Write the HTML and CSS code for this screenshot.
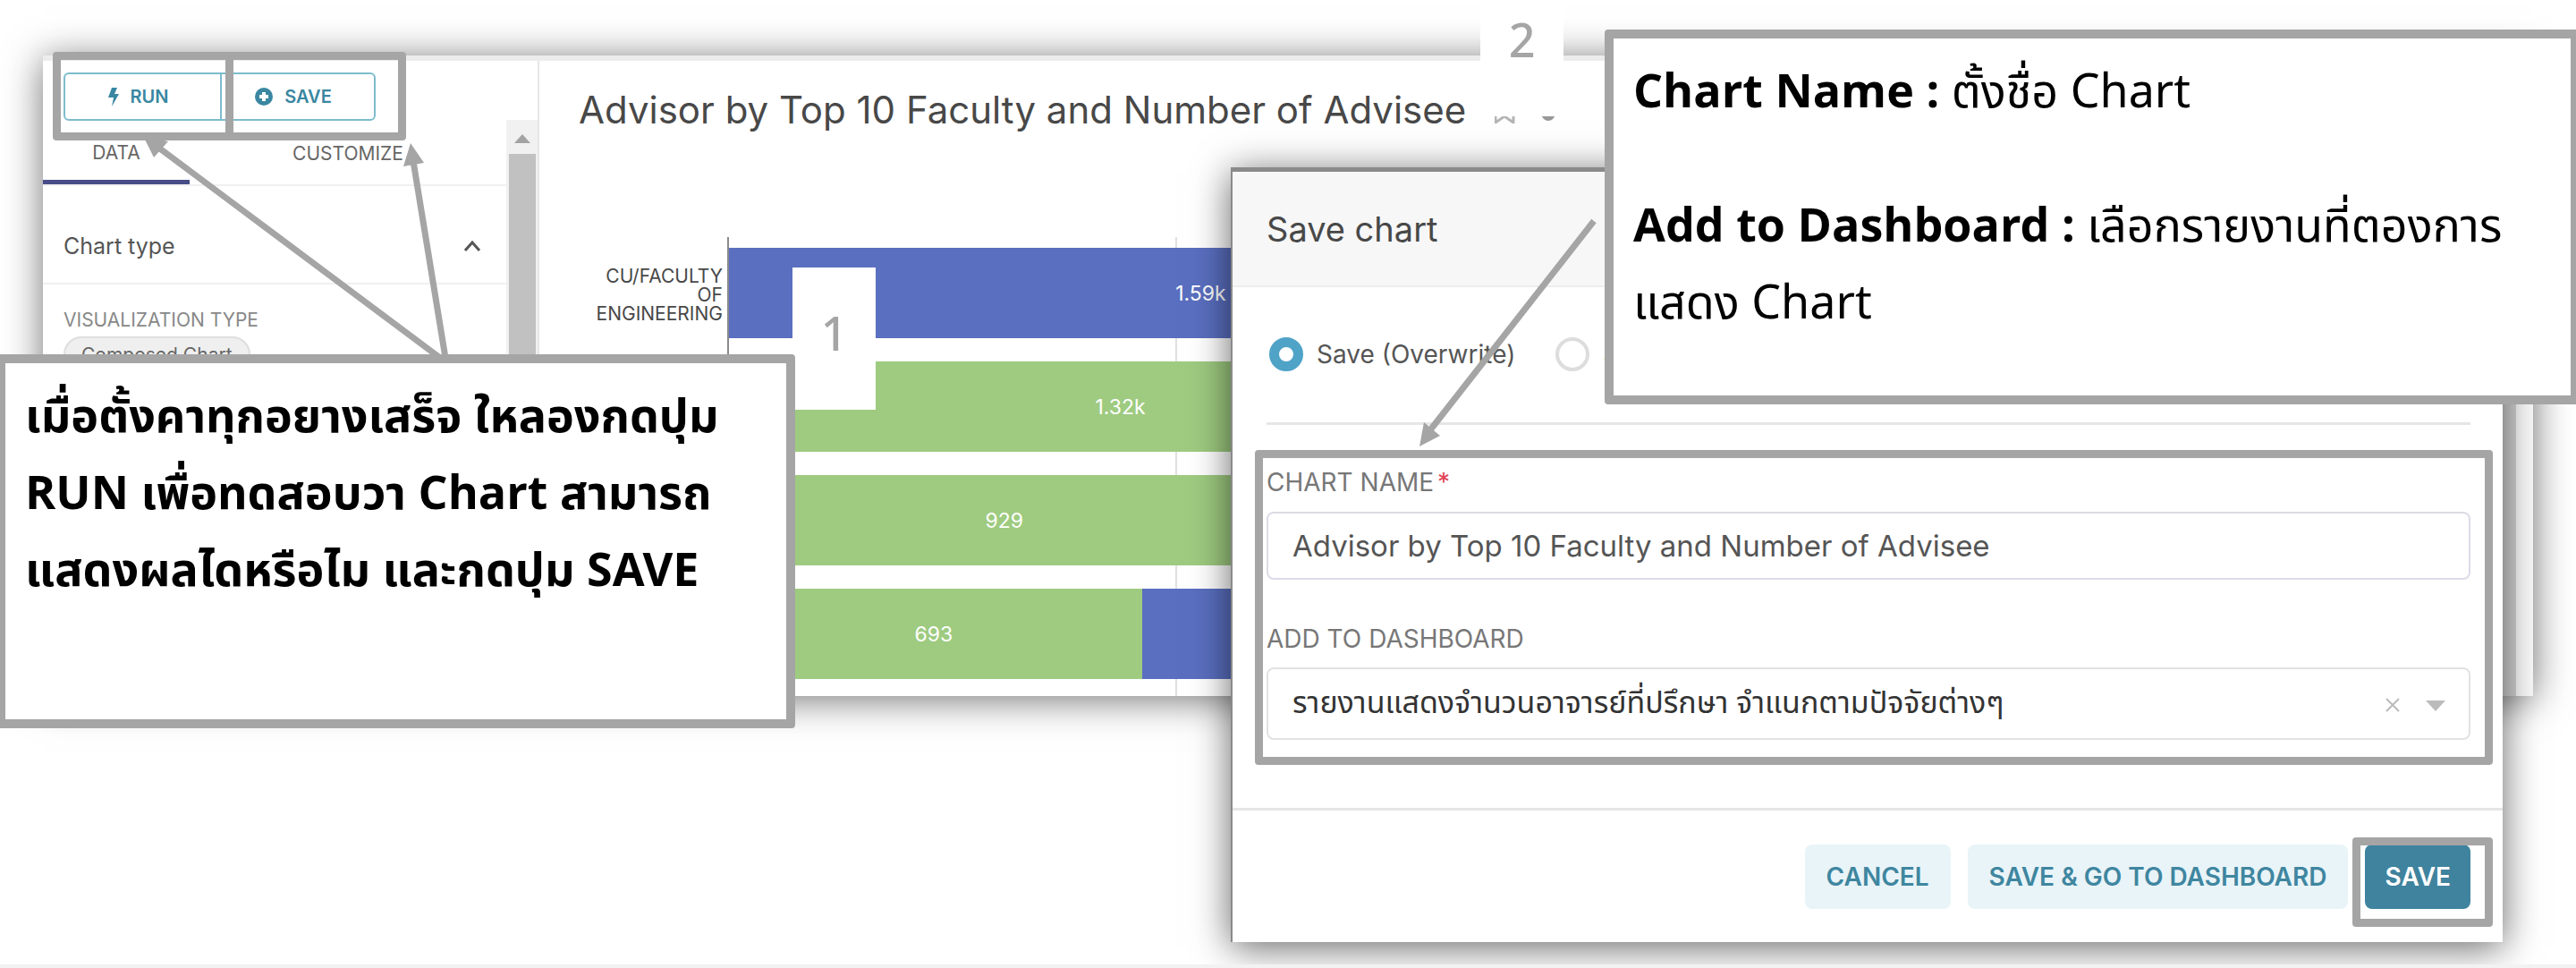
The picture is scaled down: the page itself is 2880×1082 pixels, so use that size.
FILE: index.html
```html
<!DOCTYPE html>
<html lang="th">
<head>
<meta charset="utf-8">
<title>Save chart</title>
<link rel="stylesheet" href="styles.css">
</head>
<body>
<main class="slide">
  <section class="explore">
    <aside class="controls">
      <div class="run-bar">
        <button class="run-btn" type="button">
          <svg width="12" height="22" viewBox="0 0 12 22"><path d="M4 1h6L7 8h5L4 22l2-10H0z" fill="#3a87a1"/></svg>RUN
        </button>
        <button class="run-btn" type="button">
          <svg width="20" height="20" viewBox="0 0 20 20"><circle cx="10" cy="10" r="10" fill="#3a87a1"/><path d="M10 5v10M5 10h10" stroke="#fff" stroke-width="4"/></svg>SAVE
        </button>
        <span class="frame frame-run"></span>
        <span class="frame frame-save"></span>
      </div>
      <div class="control-scroll">
        <div class="control-body">
          <nav class="tabs">
            <button class="tab tab-on" type="button">DATA</button>
            <button class="tab" type="button">CUSTOMIZE</button>
          </nav>
          <div class="section-head">
            <span>Chart type</span>
            <svg width="20" height="14" viewBox="0 0 20 14"><path d="M2 12l8-9 8 9" fill="none" stroke="#555" stroke-width="3"/></svg>
          </div>
          <div class="viz">
            <span class="viz-label">VISUALIZATION TYPE</span>
            <span class="pill">Composed Chart</span>
          </div>
        </div>
        <div class="scrollbar">
          <svg width="18" height="10" viewBox="0 0 18 10"><path d="M9 0l9 10H0z" fill="#a3a3a3"/></svg>
          <span class="thumb"></span>
        </div>
      </div>
    </aside>
    <section class="chart-pane">
      <header class="chart-head">
        <h1>Advisor by Top 10 Faculty and Number of Advisee</h1>
        <svg width="72" height="30" viewBox="0 0 72 30"><path d="M1 2h20v27l-10-7-10 7z" fill="none" stroke="#b5b5b5" stroke-width="3"/><path d="M51 18h18q-3 9-9 9t-9-9z" fill="#999"/></svg>
      </header>
      <div class="chart">
        <div class="axis-labels"><span>CU/FACULTY<br>OF<br>ENGINEERING</span></div>
        <div class="plot">
          <div class="row"><div class="bar blue" style="width:53%">1.59k</div></div>
          <div class="row"><div class="bar green" style="width:44%">1.32k</div></div>
          <div class="row"><div class="bar green" style="width:31%">929</div></div>
          <div class="row"><div class="bar green" style="width:23.1%">693</div><div class="bar blue" style="width:12%"></div></div>
        </div>
      </div>
    </section>
  </section>

  <form class="modal">
    <header class="modal-head"><h2>Save chart</h2></header>
    <div class="modal-body">
      <div class="choices">
        <label><input type="radio" name="mode" checked>Save (Overwrite)</label>
        <label><input type="radio" name="mode">Save as ...</label>
      </div>
      <div class="fields">
        <label class="field-label" for="chart-name">CHART NAME<span class="req">*</span></label>
        <input class="control" id="chart-name" type="text" value="Advisor by Top 10 Faculty and Number of Advisee">
        <label class="field-label" for="dashboard">ADD TO DASHBOARD</label>
        <div class="select-wrap">
          <select class="control thai" id="dashboard"><option>รายงานแสดงจำนวนอาจารย์ที่ปรึกษา จำแนกตามปัจจัยต่างๆ</option></select>
          <svg class="select-icons" width="68" height="18" viewBox="0 0 68 18"><path d="M2 2l14 14M16 2L2 16" stroke="#bbb" stroke-width="2"/><path d="M46 4h22L57 16z" fill="#bbb"/></svg>
        </div>
        <span class="frame frame-fields"></span>
      </div>
    </div>
    <footer class="modal-foot">
      <button class="btn" type="button">CANCEL</button>
      <button class="btn" type="button">SAVE &amp; GO TO DASHBOARD</button>
      <span class="primary-wrap"><button class="btn primary" type="submit">SAVE</button><span class="frame frame-submit"></span></span>
    </footer>
  </form>

  <svg class="arrows" width="2880" height="1082" viewBox="0 0 2880 1082">
    <g stroke="#a5a5a5" stroke-width="7"><path d="M492 400L176 164"/><path d="M498 400L462 180"/><path d="M1782 247L1598 482"/></g>
    <g fill="#a5a5a5"><path d="M160 152l28 6-16 18z"/><path d="M459 160l15 22-23 4z"/><path d="M1587 499l5-27 18 15z"/></g>
  </svg>

  <span class="badge badge-one">1</span>
  <span class="badge badge-two">2</span>

  <section class="note note-run">
    <p><b>เมื่อตั้งคาทุกอยางเสร็จ ใหลองกดปุม<br>RUN เพื่อทดสอบวา Chart สามารถ<br>แสดงผลไดหรือไม และกดปุม SAVE</b></p>
  </section>
  <section class="note note-save">
    <p><b>Chart Name :</b> ตั้งชื่อ Chart</p>
    <p><b>Add to Dashboard :</b> เลือกรายงานที่ตองการ<br>แสดง Chart</p>
  </section>
</main>
</body>
</html>
```
FILE: styles.css
```css
* { box-sizing: border-box; }
body { margin: 0; background: #fff; font-family: Inter, "Liberation Sans", sans-serif; color: #484848; }
h1, h2, p { margin: 0; font-weight: 400; }
button, input, select { font: inherit; color: inherit; margin: 0; }
.slide { position: relative; overflow: hidden; min-height: 100vh; padding: 62px 48px 0; border-bottom: 4px solid #f2f2f2; }

.explore { display: grid; grid-template-columns: 555px 1fr; height: 716px; background: #fff; border-top: 6px solid #ececec; box-shadow: 0 4px 40px rgba(0,0,0,.55); }
.controls { display: flex; flex-direction: column; border-right: 2px solid #e6e6e6; }
.run-bar { position: relative; display: flex; height: 66px; padding: 13px 23px 0; }
.run-btn { display: flex; align-items: center; justify-content: center; gap: 13px; width: 177px; height: 54px; padding: 0 10px 0 0; background: #fff; border: 2px solid #7dbccd; border-radius: 6px 0 0 6px; color: #3a87a1; font-size: 20px; font-weight: 600; }
.run-btn + .run-btn { width: 174px; margin-left: -2px; border-radius: 0 6px 6px 0; }
.frame { position: absolute; border: 9px solid #a5a5a5; border-radius: 4px; pointer-events: none; }
.frame-run { left: 11px; top: -10px; width: 202px; height: 99px; }
.frame-save { left: 204px; top: -10px; width: 202px; height: 99px; }
.control-scroll { display: flex; flex: 1; }
.control-body { flex: 1; }
.tabs { display: flex; height: 74px; border-bottom: 2px solid #f0f0f0; }
.tab { width: 164px; padding: 2px 0 0; background: none; border: 0; font-size: 21px; color: #666; }
.tab + .tab { width: 354px; }
.tab-on { padding-top: 5px; border-bottom: 5px solid #484d88; }
.section-head { display: flex; align-items: center; justify-content: space-between; height: 110px; padding: 26px 28px 0 23px; border-bottom: 2px solid #f0f0f0; font-size: 25px; color: #555; }
.viz { display: flex; flex-direction: column; align-items: flex-start; gap: 4px; padding: 26px 23px; font-size: 21px; color: #888; }
.viz-label { line-height: 28px; }
.pill { padding: 0 18px; line-height: 38px; border: 2px solid #dedede; border-radius: 20px; background: #efefef; color: #666; }
.scrollbar { display: flex; flex-direction: column; align-items: center; gap: 12px; width: 36px; padding-top: 16px; background: #f1f1f1; }
.thumb { flex: 1; width: 30px; background: #c1c1c1; }

.chart-pane { padding: 30px 19px 0 44px; overflow: hidden; background: linear-gradient(#fafafa,#fafafa) right / 19px 100% no-repeat, linear-gradient(#d4d4d4,#d4d4d4) right 19px top / 16px 100% no-repeat; }
.chart-head { display: flex; align-items: center; gap: 32px; height: 50px; }
.chart-head h1 { font-size: 42px; line-height: 50px; white-space: nowrap; }
.chart { display: grid; grid-template-columns: 166px 1fr; margin-top: 117px; }
.axis-labels { padding: 33px 5px 0 0; text-align: right; font-size: 21px; line-height: 21px; }
.plot { display: flex; flex-direction: column; gap: 26px; height: 520px; padding-top: 12px; border-left: 2px solid #8a8a8a; background: linear-gradient(#e0e0e0,#e0e0e0) 25% 0 / 2px 100% no-repeat; }
.row { display: flex; flex: none; height: 101px; }
.bar { display: flex; align-items: center; justify-content: center; padding-right: 4px; color: #fff; font-size: 23px; }
.blue { background: #5a6fc0; }
.green { background: #9ecb80; }

.modal { position: absolute; left: 1376px; right: 82px; top: 187px; background: #fff; border-top: 5px solid #8a8a8a; border-left: 2px solid #8a8a8a; box-shadow: 0 6px 40px rgba(0,0,0,.6); }
.modal-head { height: 129px; padding: 0 38px; background: #f7f7f7; border-bottom: 2px solid #ededed; }
.modal-head h2 { font-size: 38px; line-height: 128px; }
.modal-body { padding: 54px 36px 0 38px; }
.choices { display: flex; gap: 42px; height: 100px; border-bottom: 3px solid #e6e6e6; font-size: 28px; color: #555; }
.choices label { display: flex; align-items: center; gap: 15px; height: 42px; }
.choices input { appearance: none; width: 38px; height: 38px; margin-left: 3px; border: 4px solid #ddd; border-radius: 50%; background: #fff; }
.choices input:checked { border: 11px solid #4fa3c7; }
.fields { position: relative; display: flex; flex-direction: column; padding-top: 46px; }
.field-label { font-size: 28px; line-height: 36px; margin-bottom: 15px; color: #777; }
.req { margin-left: 4px; color: #e04355; }
.control { width: 100%; height: 76px; padding: 0 27px; background: #fff; border: 2px solid #dcdce6; border-radius: 8px; font-size: 33px; color: #555; }
.control + .field-label { margin: 48px 0 14px; }
.select-wrap { position: relative; }
.thai { display: block; appearance: none; height: 81px; border-color: #e2e2e2; font-family: "Noto Sans Thai", "Noto Sans", sans-serif; font-size: 34px; color: #333; }
.select-icons { position: absolute; right: 28px; top: 33px; }
.frame-fields { left: -13px; right: -25px; top: 28px; height: 352px; }
.modal-foot { display: flex; justify-content: flex-end; gap: 19px; margin-top: 76px; padding: 38px 36px 37px; border-top: 3px solid #e6e6e6; }
.btn { height: 72px; padding: 0 24px; border: 0; border-radius: 8px; background: #e9f4f8; color: #3f86a0; font-size: 28px; font-weight: 600; white-space: nowrap; }
.primary-wrap { position: relative; }
.primary { padding: 0 22px; background: #3f839e; color: #fff; }
.frame-submit { left: -14px; right: -25px; top: -8px; height: 100px; }

.arrows { position: absolute; left: 0; top: 0; pointer-events: none; }
.note { position: absolute; background: #fff; border: 10px solid #a5a5a5; border-radius: 4px; color: #000; font-family: "Noto Sans Thai", "Noto Sans", sans-serif; font-size: 52px; line-height: 86px; white-space: nowrap; }
.note-run { left: -4px; top: 396px; width: 893px; height: 418px; padding: 18px 22px; }
.note-save { left: 1794px; right: -4px; top: 33px; height: 419px; padding: 18px 22px; }
.note p + p { margin-top: 64px; }
.badge { position: absolute; width: 93px; height: 159px; padding-top: 38px; background: #fff; color: #a5a5a5; text-align: center; font-family: "Noto Sans", sans-serif; font-size: 52px; font-weight: 500; line-height: 70px; }
.badge-one { left: 886px; top: 299px; }
.badge-two { left: 1655px; top: -29px; }
```
